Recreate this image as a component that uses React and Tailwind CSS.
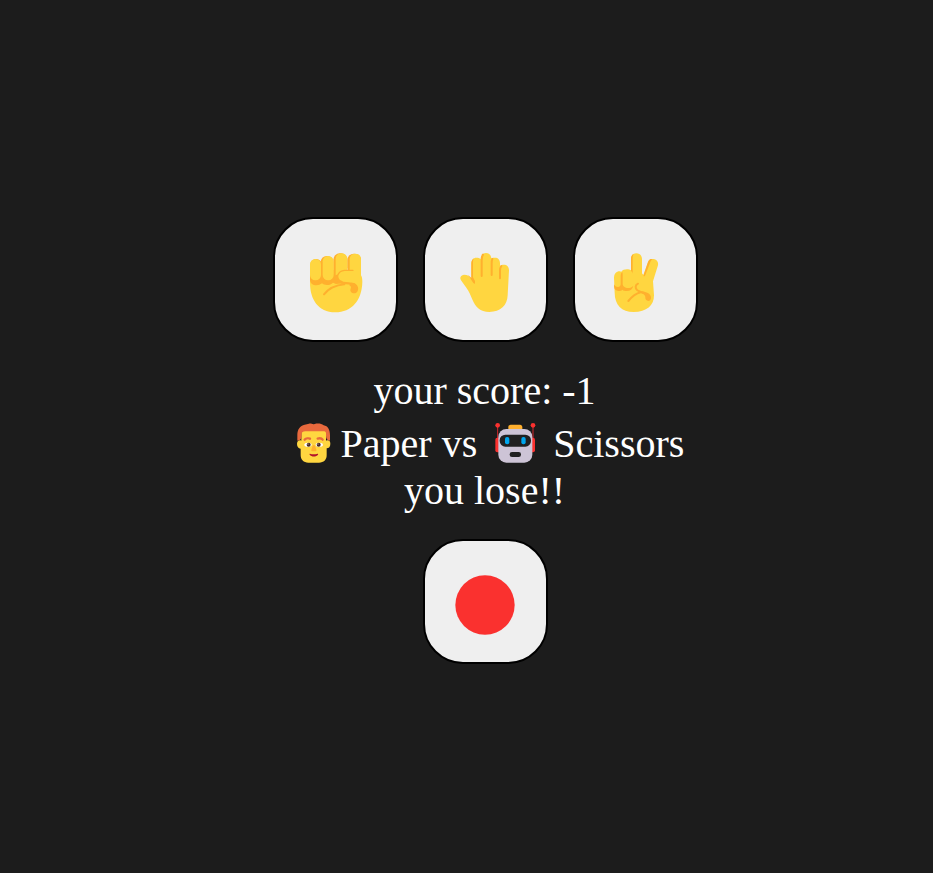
function Fist() {
  return (
    <svg viewBox="105 102 216 216" className="size-18" aria-hidden="true">
      <path
        fill="#FFD640"
        d="M135 195l20-15h133v16c3 5 4 10 4 20-1 55-32 91-81 91-52 0-76-40-76-88z"
      />
      <g fill="#FFB02E">
        <path d="M135 192h80l22 28-24 2-9-4c-5 5-10 7-18 7-7 0-11-2-15-5-5 4-10 6-16 6-12 0-20-7-20-16z" />
        <rect x="136" y="147" width="35" height="70" rx="17" />
        <rect x="167" y="138" width="38" height="80" rx="18" />
        <rect x="205" y="130" width="42" height="84" rx="19" />
        <rect x="247" y="131" width="41" height="60" rx="19" />
      </g>
      <g fill="#FFD640">
        <rect x="135" y="147" width="33" height="64" rx="16" />
        <rect x="173" y="138" width="33" height="73" rx="16" />
        <path d="M212 148c0-12 7-18 17-18 11 0 18 7 18 18v34l-20 6-15 8z" />
        <path d="M254 148c0-10 6-17 17-17s17 7 17 17v40h-34z" />
        <path d="M288 183h-50c-12 1-18 7-18 16s8 15 20 16l30 6 18 12z" />
      </g>
      <g fill="none" stroke="#FFB02E" strokeLinecap="round">
        <path strokeWidth="4" d="M264 181h-26c-9 1-15 5-18 11" />
        <path strokeWidth="6" d="M177 253c13-16 31-27 61-30" />
        <path strokeWidth="7" d="M230 218c12 2 27 1 38 6" />
      </g>
      <path
        fill="#FFB02E"
        d="M256 219c11-2 20 3 23 13 2 10-3 18-11 18-9-1-14-7-11-14 2-5 1-7-4-10z"
      />
    </svg>
  );
}

function Palm() {
  return (
    <svg viewBox="105 102 216 216" className="size-18" aria-hidden="true">
      <path
        fill="#FFD640"
        d="M169 160c0-10 6-17 15-17 5 0 10 1 13 5 1-11 6-19 16-19 9 0 15 6 16 16 3-2 7-2 11-2 9 0 15 6 15 17v8c3-3 7-4 11-4 10 0 16 6 16 17l-4 75c-1 30-21 50-55 50-28 0-42-16-50-35-6-15-10-26-19-38l-16-22c-5-8-1-16 9-17 11 0 16 4 22 13z"
      />
      <path
        fill="#FFB02E"
        d="M178 144c-6 3-9 9-9 17v43l-10-10 14 22c2 3 5 6 7 5v-8l-6-11v-45c0-6 1-10 4-13z"
      />
      <g fill="none" stroke="#FFB02E" strokeWidth="6" strokeLinecap="round">
        <path d="M204 134c-4 5-4 10-4 18v46" />
        <path d="M232 147c-2 4-2 8-2 14v34" />
        <path d="M259 168c-3 4-4 8-4 13v24" />
      </g>
    </svg>
  );
}

function Victory() {
  return (
    <svg viewBox="105 102 216 216" className="size-18" aria-hidden="true">
      <path
        fill="#FFD640"
        d="M147 204c0-13 7-20 17-20l5 1c4-5 9-7 17-7 5 0 8 1 12 3v-34c0-11 6-17 16-17s17 7 17 17v43l4 5 14-38c4-10 11-12 20-9 10 4 12 12 9 21l-14 45 3 42c0 31-22 50-61 50-36 0-57-22-57-58z"
      />
      <path
        fill="#FFB02E"
        d="M206 132c-6 3-8 8-8 15v36c3 2 5 5 5 9v-44c0-7 1-12 3-16zM257 147c-5 2-6 5-8 9l-13 39v4c2 1 4-1 5-4l14-36c2-6 5-10 8-12-2 0-4 0-6 0z"
      />
      <path
        fill="#FFB02E"
        d="M172 186c-4 3-5 7-5 13v24c-1 6-3 8-8 8-6 0-10-3-12-8v6c0 9 6 14 13 14 6 0 9-1 12-4 3 3 7 4 13 4 11 0 18-6 20-16-4 4-9 7-16 7-9 0-16-5-16-12v-26c0-4 0-7-1-10z"
      />
      <g fill="none" stroke="#FFB02E" strokeWidth="6" strokeLinecap="round">
        <path d="M219 221c-9 4-9 14-2 20 5 4 12 5 20 8" />
        <path d="M190 273c11-13 21-22 37-26" />
      </g>
      <path
        fill="#FFB02E"
        d="M230 244c15 2 26 7 28 17 1 7-3 12-8 12-6-1-10-5-9-11 0-6-4-9-11-12z"
      />
    </svg>
  );
}

function RedCircle() {
  return (
    <svg viewBox="105 108 216 216" className="size-18" aria-hidden="true">
      <circle cx="210" cy="225" r="89" fill="#FA312F" />
    </svg>
  );
}

function Man() {
  return (
    <svg viewBox="17 15 138 138" className="mb-px size-[46px]" role="img" aria-label="Player">
      <path
        fill="#FFD640"
        d="M48 40h74v37c9-3 13 1 13 9 0 9-4 14-11 14v21c0 14-9 22-23 22H69c-14 0-23-9-23-22v-20c-7 0-11-6-11-14 0-8 5-13 13-10z"
      />
      <path
        fill="#E8693D"
        d="M36 77V60c0-17 8-28 22-31l13-3c8-1 10 3 17 1 9-2 20-2 27 4 13 2 19 14 19 30v16c-7 0-12-5-12-14v-8c0-5-4-6-10-6H60c-7 0-11 3-11 8v7c0 8-5 13-13 13z"
      />
      <path
        fill="none"
        stroke="#E8693D"
        strokeWidth="7"
        strokeLinecap="round"
        d="M58 74c4-4 12-5 16-3M97 71c6-2 12-1 15 3"
      />
      <ellipse cx="68" cy="89" rx="11" ry="6" fill="#fff" />
      <ellipse cx="102" cy="89" rx="11" ry="6" fill="#fff" />
      <circle cx="70" cy="89" r="6" fill="#4A2A22" />
      <circle cx="100" cy="89" r="6" fill="#4A2A22" />
      <circle cx="68" cy="87" r="1.5" fill="#fff" />
      <circle cx="98" cy="87" r="1.5" fill="#fff" />
      <path fill="#FFB02E" d="M82 92c1-3 6-3 7 0l4 12c1 3-1 5-4 5h-7c-3 0-5-2-4-5z" />
      <path fill="#B4132B" d="M74 116c7 2 15 2 23 0 1 0 2 1 1 3-5 7-20 7-25 0-1-2 0-3 1-3z" />
    </svg>
  );
}

function Robot() {
  return (
    <svg viewBox="21 15 138 138" className="mb-px size-[46px]" role="img" aria-label="Computer">
      <path fill="none" stroke="#D3262C" strokeWidth="3" d="M38 32v42M144 32v42" />
      <circle cx="38" cy="31" r="7" fill="#FA312F" />
      <circle cx="144" cy="31" r="7" fill="#FA312F" />
      <rect x="31" y="68" width="16" height="44" rx="6" fill="#FA312F" />
      <rect x="134" y="68" width="16" height="44" rx="6" fill="#FA312F" />
      <path fill="#FFB02E" d="M70 42v-6c0-4 3-7 7-7h28c4 0 7 3 7 7v6z" />
      <rect x="40" y="42" width="102" height="101" rx="24" fill="#CDC4D6" />
      <rect x="44" y="59" width="94" height="36" rx="17" fill="#212121" />
      <rect x="60" y="66" width="13" height="22" rx="6" fill="#00A6ED" />
      <rect x="109" y="66" width="13" height="22" rx="6" fill="#00A6ED" />
      <rect x="74" y="111" width="34" height="15" rx="7" fill="#212121" />
    </svg>
  );
}

function GameButton({ label, children }) {
  return (
    <button
      type="button"
      aria-label={label}
      className="flex size-[125px] items-center justify-center rounded-[40px] border-2 border-black bg-[#efefef]"
    >
      {children}
    </button>
  );
}

export default function App() {
  return (
    <main className="flex min-h-screen flex-col items-center justify-center bg-[#1c1c1c] pt-2 pl-[38px] font-['Liberation_Serif',serif] text-[40px] leading-[46px] text-white">
      <div className="flex flex-wrap justify-center gap-[25px]">
        <GameButton label="Rock">
          <Fist />
        </GameButton>
        <GameButton label="Paper">
          <Palm />
        </GameButton>
        <GameButton label="Scissors">
          <Victory />
        </GameButton>
      </div>
      <div className="mt-[26px] mb-[25px] flex flex-col items-center pr-0.5">
        <p>your score: -1</p>
        <div className="flex items-end pt-1.5 pb-px pl-1.5">
          <Man />
          <span className="ml-1">Paper vs</span>
          <span className="mx-[15px]">
            <Robot />
          </span>
          <span>Scissors</span>
        </div>
        <p>you lose!!</p>
      </div>
      <GameButton label="Reset score">
        <RedCircle />
      </GameButton>
    </main>
  );
}
